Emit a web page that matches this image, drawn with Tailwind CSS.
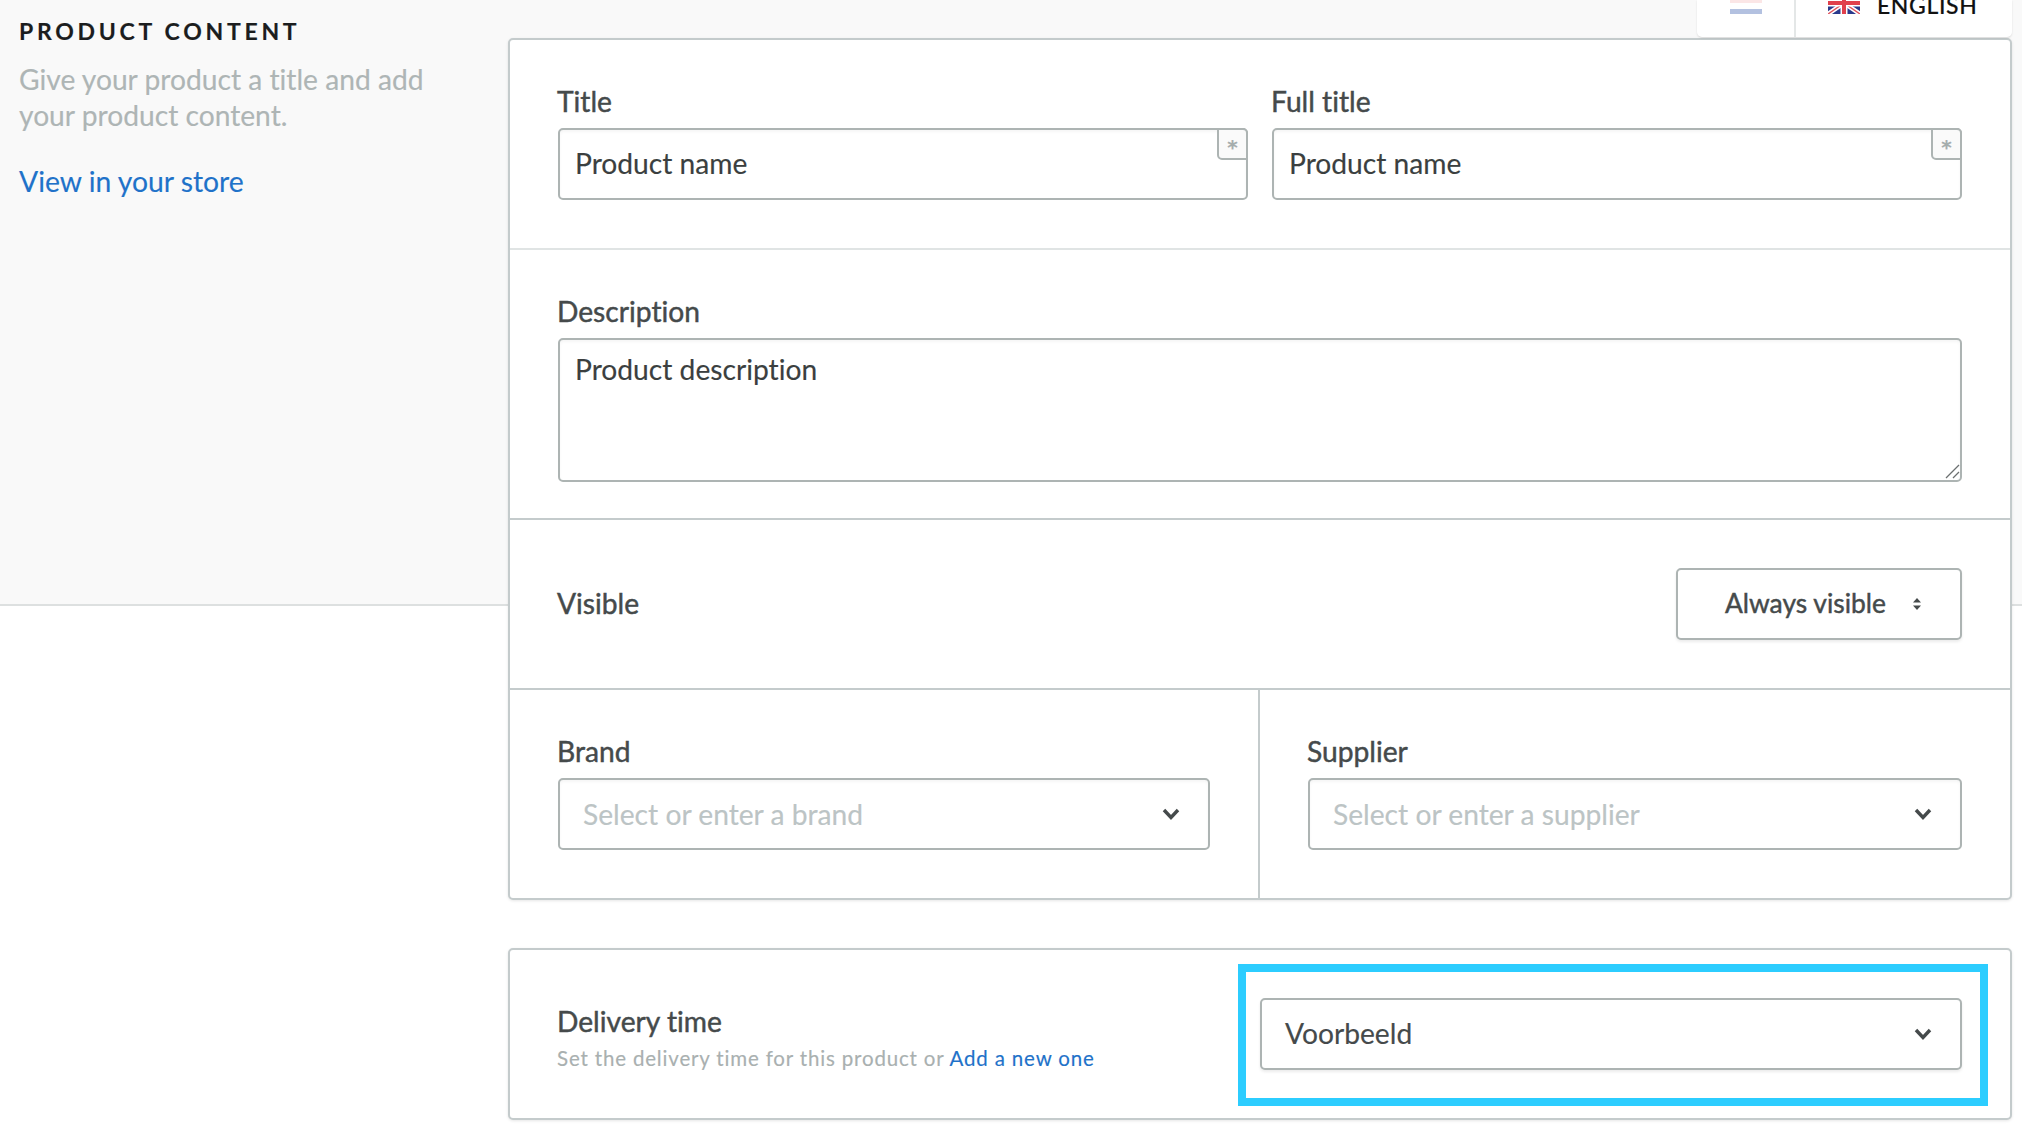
<!DOCTYPE html>
<html lang="en">
  <head>
    <meta charset="UTF-8" />
    <meta name="viewport" content="width=device-width, initial-scale=1.0" />
    <title>Product content</title>
    <script src="https://cdn.jsdelivr.net/npm/@tailwindcss/browser@4"></script>
  </head>
  <body class="bg-white font-['Lato',sans-serif] text-[#454a4b] overflow-hidden [font-variant-ligatures:none] [-webkit-text-stroke:0.15px]">
    <div class="relative h-[1130px] w-[2022px] overflow-hidden">
      <!-- grey band behind the first card -->
      <div class="absolute inset-x-0 top-0 h-[606px] bg-[#f9f9f9] border-b-2 border-[#dde0e0]"></div>

      <div class="relative flex">
        <!-- Sidebar -->
        <aside class="w-[508px] shrink-0 pl-[19px] pr-[40px] pt-[15px]">
          <h2 class="text-[23px] leading-[32px] font-bold tracking-[3.72px] text-[#1b1d1e]">PRODUCT CONTENT</h2>
          <p class="mt-[14px] text-[28.2px] leading-[36px] text-[#aeb5b5]">Give your product a title and add your product content.</p>
          <a href="#" class="mt-[30px] block text-[28.3px] leading-[36px] text-[#1f72c9]">View in your store</a>
        </aside>

        <!-- Main column -->
        <main class="relative w-[1504px] shrink-0 pt-[38px]">
          <!-- Language tabs -->
          <div class="absolute right-0 top-0 flex h-[37px] w-[315px] overflow-hidden rounded-b-[5px] bg-white shadow-[0_1px_2px_rgba(0,0,0,0.12)]">
            <div class="flex w-[99px] justify-center border-r-2 border-[#e4e7e7]">
              <svg width="32" height="14" viewBox="0 0 32 14">
                <rect width="32" height="3" fill="#fbe6e6" />
                <rect y="3" width="32" height="6" fill="#ffffff" />
                <rect y="9" width="32" height="5" fill="#b3c1e0" />
              </svg>
            </div>
            <div class="flex flex-1 pl-[32px]">
              <svg width="32" height="14" viewBox="0 8 32 14">
                <rect y="0" width="32" height="22" fill="#2a3a8c" />
                <path d="M0 0L32 22M32 0L0 22" stroke="#fff" stroke-width="4.5" />
                <path d="M0 0L32 22M32 0L0 22" stroke="#e0505a" stroke-width="1.4" />
                <path d="M16 0V22M0 11H32" stroke="#fff" stroke-width="7" />
                <path d="M16 0V22M0 11H32" stroke="#e0404c" stroke-width="4" />
              </svg>
              <span class="ml-[17px] -mt-[10px] text-[23px] leading-[30px] font-medium tracking-[0.6px] text-[#111]">ENGLISH</span>
            </div>
          </div>

          <!-- Product card -->
          <section class="rounded-[5px] border-2 border-[#c4cbcc] bg-white shadow-[0_1px_3px_rgba(0,0,0,0.1)]">
            <div class="grid h-[210px] grid-cols-2 gap-x-[24px] border-b-2 border-[#e0e4e4] pl-[48px] pr-[48px] pt-[41px]">
              <div>
                <label class="-ml-[1px] block text-[28.2px] leading-[40px] [-webkit-text-stroke:0.45px]">Title</label>
                <div class="relative mt-[7px]">
                  <input value="Product name" class="h-[72px] w-full rounded-[5px] border-2 border-[#adb4b3] bg-white px-[15px] pb-[2px] text-[28.2px] text-[#3b3f40] shadow-[inset_0_2px_3px_rgba(0,0,0,0.04)] outline-none" />
                  <span class="absolute right-0 top-0 flex h-[32px] w-[31px] justify-center overflow-hidden rounded-bl-[5px] rounded-tr-[5px] border-2 border-[#adb4b3] bg-[#fafafa] pt-[2px] font-['DejaVu_Sans',sans-serif] text-[20px] leading-[30px] font-bold text-[#a5adad]">*</span>
                </div>
              </div>
              <div>
                <label class="-ml-[1px] block text-[28.2px] leading-[40px] [-webkit-text-stroke:0.45px]">Full title</label>
                <div class="relative mt-[7px]">
                  <input value="Product name" class="h-[72px] w-full rounded-[5px] border-2 border-[#adb4b3] bg-white px-[15px] pb-[2px] text-[28.2px] text-[#3b3f40] shadow-[inset_0_2px_3px_rgba(0,0,0,0.04)] outline-none" />
                  <span class="absolute right-0 top-0 flex h-[32px] w-[31px] justify-center overflow-hidden rounded-bl-[5px] rounded-tr-[5px] border-2 border-[#adb4b3] bg-[#fafafa] pt-[2px] font-['DejaVu_Sans',sans-serif] text-[20px] leading-[30px] font-bold text-[#a5adad]">*</span>
                </div>
              </div>
            </div>

            <div class="h-[270px] border-b-2 border-[#c4cbcc] pl-[48px] pr-[48px] pt-[41px]">
              <label class="-ml-[1px] block text-[28.2px] leading-[40px] [-webkit-text-stroke:0.45px]">Description</label>
              <div class="relative mt-[7px]">
                <textarea class="block h-[144px] w-full resize-none rounded-[5px] border-2 border-[#adb4b3] bg-white px-[15px] py-[11px] text-[28.2px] leading-[36px] text-[#3b3f40] shadow-[inset_0_2px_3px_rgba(0,0,0,0.04)] outline-none">Product description</textarea>
                <svg class="absolute bottom-[3px] right-[2px]" width="15" height="15" viewBox="0 0 15 15" fill="none" stroke="#6b6f70" stroke-width="1.3"><path d="M1 14L14 1M8 14L14 8" /></svg>
              </div>
            </div>

            <div class="flex h-[170px] items-center justify-between border-b-2 border-[#c4cbcc] pl-[48px] pr-[48px]">
              <span class="-ml-[1px] pb-[2px] text-[28.2px] [-webkit-text-stroke:0.45px]">Visible</span>
              <button class="flex h-[72px] w-[286px] items-center rounded-[5px] border-2 border-[#adb4b3] bg-white pl-[47px] text-[26.4px] text-[#454a4b] shadow-[0_2px_3px_rgba(0,0,0,0.08)] [-webkit-text-stroke:0.45px]">
                Always visible
                <svg class="ml-[26px]" width="10" height="14" viewBox="0 0 10 14" fill="#454a4b">
                  <path d="M5 1L9 5.5H1Z" />
                  <path d="M5 13L9 8.5H1Z" />
                </svg>
              </button>
            </div>

            <div class="grid h-[208px] grid-cols-[750px_1fr]">
              <div class="border-r-2 border-[#c4cbcc] pl-[48px] pr-[48px] pt-[41px]">
                <label class="-ml-[1px] block text-[28.2px] leading-[40px] [-webkit-text-stroke:0.45px]">Brand</label>
                <div class="relative mt-[7px]">
                  <input placeholder="Select or enter a brand" class="h-[72px] w-full rounded-[5px] border-2 border-[#adb4b3] bg-white px-[23px] text-[28.2px] shadow-[inset_0_2px_3px_rgba(0,0,0,0.04)] outline-none placeholder:text-[#bcc4c5]" />
                  <svg class="absolute right-[30px] top-[29px]" width="18" height="14" viewBox="0 0 18 14" fill="none" stroke="#454a4b" stroke-width="3.4"><path d="M2 3L9 10.5L16 3" /></svg>
                </div>
              </div>
              <div class="pl-[48px] pr-[48px] pt-[41px]">
                <label class="-ml-[1px] block text-[28.2px] leading-[40px] [-webkit-text-stroke:0.45px]">Supplier</label>
                <div class="relative mt-[7px]">
                  <input placeholder="Select or enter a supplier" class="h-[72px] w-full rounded-[5px] border-2 border-[#adb4b3] bg-white px-[23px] text-[28.2px] shadow-[inset_0_2px_3px_rgba(0,0,0,0.04)] outline-none placeholder:text-[#bcc4c5]" />
                  <svg class="absolute right-[30px] top-[29px]" width="18" height="14" viewBox="0 0 18 14" fill="none" stroke="#454a4b" stroke-width="3.4"><path d="M2 3L9 10.5L16 3" /></svg>
                </div>
              </div>
            </div>
          </section>

          <!-- Delivery card -->
          <section class="relative mt-[48px] flex h-[172px] items-center justify-between rounded-[5px] border-2 border-[#c4cbcc] bg-white pl-[48px] pr-[48px] shadow-[0_1px_3px_rgba(0,0,0,0.1)]">
            <div class="-ml-[1px] pt-[6px]">
              <div class="text-[28.2px] leading-[36px] [-webkit-text-stroke:0.45px]">Delivery time</div>
              <div class="mt-[5px] text-[20.5px] leading-[28px] tracking-[0.83px] text-[#a9b0b0]">Set the delivery time for this product or <a href="#" class="text-[#1f72c9]">Add a new one</a></div>
            </div>
            <div class="relative w-[702px]">
              <div class="flex h-[72px] items-center justify-between rounded-[5px] border-2 border-[#adb4b3] bg-white pb-[1px] pl-[23px] pr-[28px] text-[28.2px] shadow-[0_2px_3px_rgba(0,0,0,0.08)]">
                Voorbeeld
                <svg width="18" height="14" viewBox="0 0 18 14" fill="none" stroke="#454a4b" stroke-width="3.4"><path d="M2 3L9 10.5L16 3" /></svg>
              </div>
              <!-- highlight annotation -->
              <div class="absolute -left-[22px] -right-[26px] -top-[34px] -bottom-[36px] border-[8px] border-[#2ccdff]"></div>
            </div>
          </section>
        </main>
      </div>
    </div>
  </body>
</html>
